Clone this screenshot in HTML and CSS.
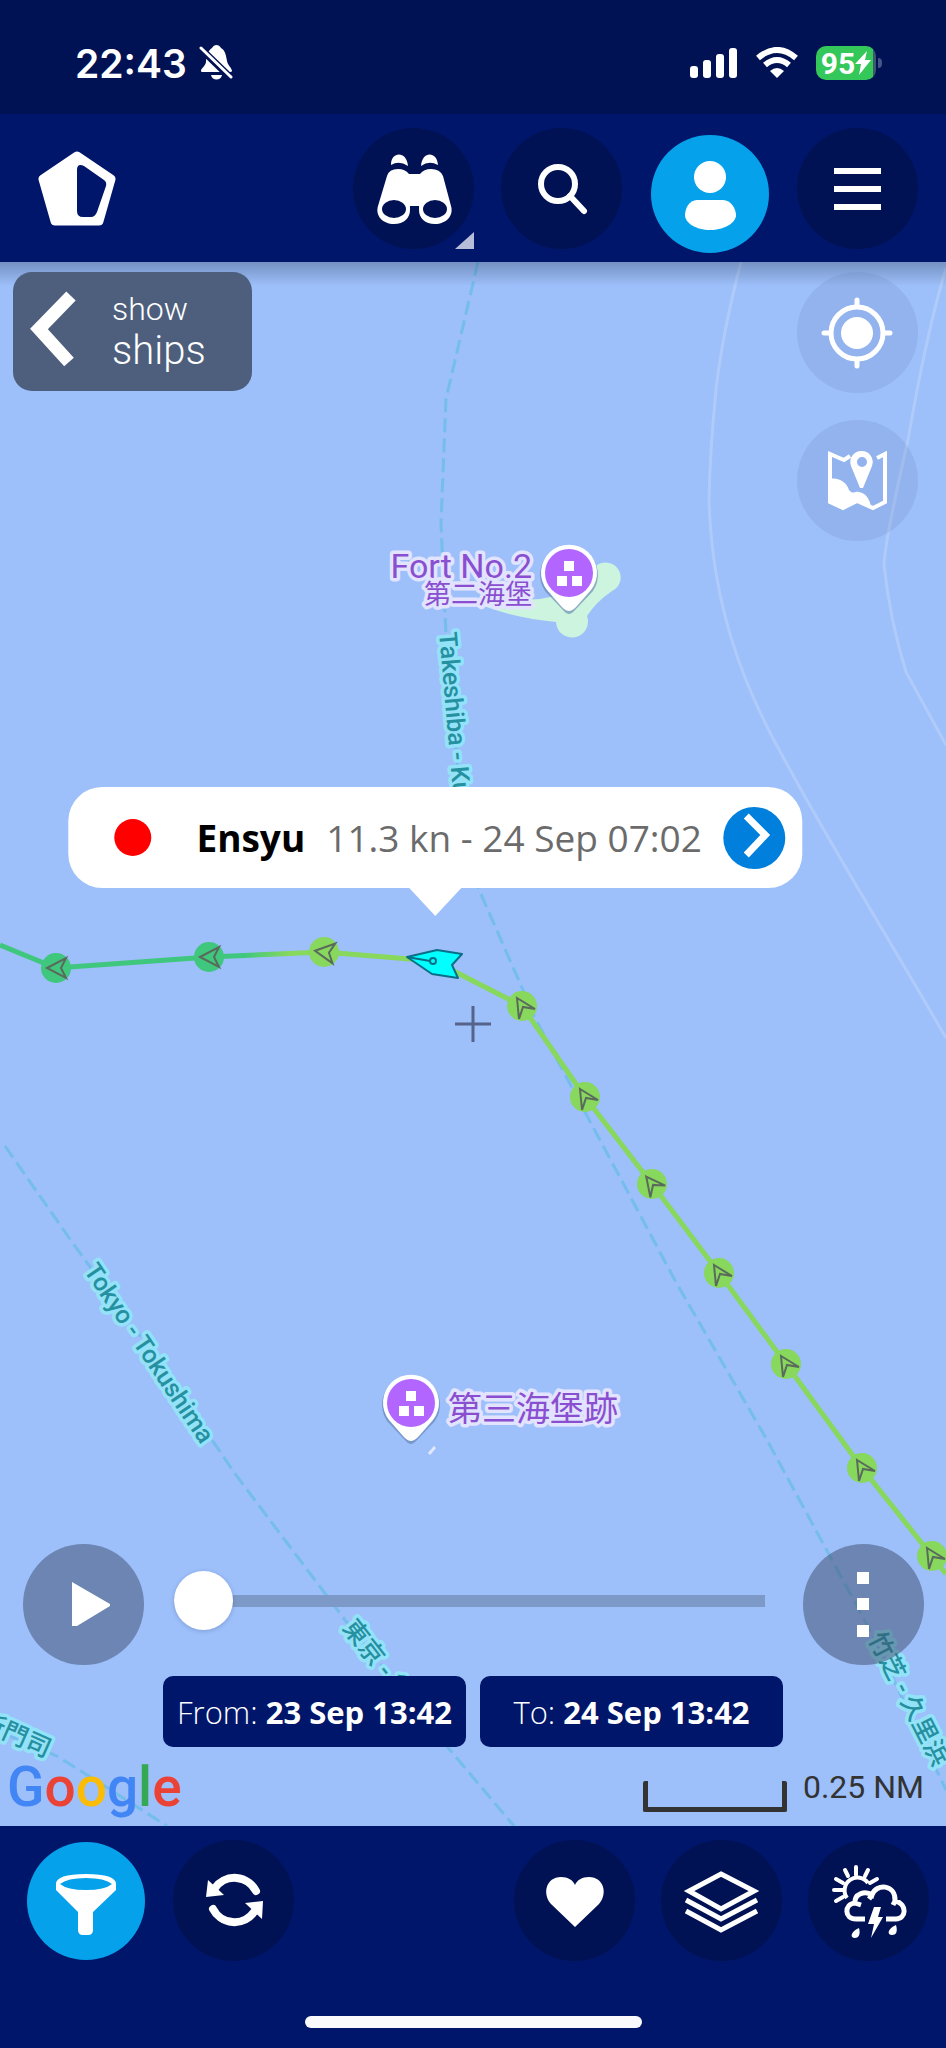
FILE: index.html
```html
<!DOCTYPE html>
<html lang="en">
<head>
    <meta charset="UTF-8">
    <meta name="viewport" content="width=device-width, initial-scale=1.0">
    <title>Ship Track Playback</title>
    <link rel="stylesheet" href="styles.css">
</head>
<body>
    <div class="status-bar">
        <span class="status-time">22:43</span>
        <svg class="icon-bell" width="34" height="36" viewBox="0 0 34 36">
            <path d="M2 26 C2 23 6 22 7 17 C7 9 10 5 13 3 C15 -1 20 -1 22 3 C26 5 27 10 28 16 C29 21 33 23 33 26 Q33 27 31 27 H3 Q2 27 2 26Z M12 30 H23 C22 36 13 36 12 30Z" fill="#fff"/>
            <path d="M1 3 L33 34" stroke="#011254" stroke-width="7"/>
            <path d="M2 3 L32 32" stroke="#fff" stroke-width="3" stroke-linecap="round"/>
        </svg>
        <div class="status-icons">
            <svg width="48" height="32" viewBox="0 0 48 32" fill="#fff">
                <rect x="0" y="19" width="8" height="12" rx="3"/>
                <rect x="13" y="13" width="8" height="18" rx="3"/>
                <rect x="26" y="7" width="8" height="24" rx="3"/>
                <rect x="39" y="1" width="8" height="30" rx="3"/>
            </svg>
            <svg width="42" height="32" viewBox="0 0 42 32" fill="none" stroke="#fff" stroke-width="6">
                <path d="M2 11 Q21 -5 40 11"/>
                <path d="M9 18 Q21 8 33 18"/>
                <path d="M21 31 L14 24 Q21 18 28 24Z" fill="#fff" stroke="none"/>
            </svg>
            <div class="battery">
                <span>95</span>
                <svg width="16" height="24" viewBox="0 0 14 24"><path d="M11 0 L-1 13 H5 L3 24 L15 9 H9Z" fill="#fff"/></svg>
            </div>
        </div>
    </div>

    <header class="top-bar">
        <a href="#" class="logo" aria-label="Home">
            <svg width="78" height="75" viewBox="0 0 78 75">
                <path d="M39 5 L73 28 L61 70 H17 L5 28Z" fill="#fff" stroke="#fff" stroke-width="9" stroke-linejoin="round"/>
                <path d="M39 19 Q39 12 46 15 L66 29 Q69 31 68 35 L59 61 Q57 66 53 66 H45 Q39 66 39 60Z" fill="#00166a"/>
            </svg>
        </a>
        <button class="round-btn" aria-label="Explore">
            <svg width="121" height="121" viewBox="0 0 121 121" fill="#fff">
                <path d="M38 37 C38 23 54 23 55 38 Q46 32 38 37Z M68 38 C69 23 84 23 85 37 Q76 32 68 38Z"/>
                <path fill-rule="evenodd" d="M34 48 Q36 41 45 41 Q52 41 56 46 H67 Q71 41 78 41 Q87 41 90 48 L98 78 C101 88 93 96 82 96 C72 96 66 90 66 82 V78 H57 V82 C57 90 51 96 41 96 C30 96 22 88 25 78Z M29 81 A12 9 0 0 0 53 81 A12 9 0 0 0 29 81Z M70 81 A12 9 0 0 0 94 81 A12 9 0 0 0 70 81Z"/>
                <path d="M121 104 V121 H102Z" fill="#b7bcd8"/>
            </svg>
        </button>
        <button class="round-btn" aria-label="Search">
            <svg width="121" height="121" viewBox="0 0 121 121" fill="none" stroke="#fff" stroke-width="6">
                <circle cx="57" cy="56" r="17"/>
                <path d="M69 68 L83 83" stroke-linecap="round"/>
            </svg>
        </button>
        <button class="round-btn active account" aria-label="Account">
            <svg width="118" height="118" viewBox="0 0 118 118" fill="#fff">
                <circle cx="59" cy="42" r="16"/>
                <path d="M46 65 H72 C80 65 85 74 85 80 C85 88 73 95 59 95 C45 95 34 88 34 80 C34 74 38 65 46 65Z"/>
            </svg>
        </button>
        <button class="round-btn" aria-label="Menu">
            <svg width="121" height="121" viewBox="0 0 121 121" stroke="#fff" stroke-width="6">
                <path d="M37 43 H84 M37 61 H84 M37 79 H84"/>
            </svg>
        </button>
    </header>

    <main class="map">
        <svg class="map-canvas" viewBox="0 262 946 1564" preserveAspectRatio="xMidYMid slice">
            <defs>
                <linearGradient id="speed" gradientUnits="userSpaceOnUse" x1="209" y1="0" x2="324" y2="0">
                    <stop offset="0.3" stop-color="#3fc77e"/>
                    <stop offset="0.7" stop-color="#87d85c"/>
                </linearGradient>
                <g id="pin">
                    <path d="M0 39 C-3 39 -6 35 -8 33 L-24 16 A29 29 0 1 1 24 16 L8 33 C6 35 3 39 0 39Z" fill="#5f7fae" opacity="0.6" transform="translate(0 2)"/>
                    <path d="M0 38 C-3 38 -6 35 -8 33 L-22 17 A28 28 0 1 1 22 17 L8 33 C6 35 3 38 0 38Z" fill="#fff"/>
                    <circle r="24" fill="#b366ff"/>
                    <path d="M-5 -12 h10 v10 h-10z M-12 3 h10 v10 h-10z M3 3 h10 v10 h-10z" fill="#fff"/>
                </g>
                <path id="west" d="M-9 0 L10 -10 L5 0 L10 10Z"/>
                <path id="northwest" d="M-5 -8 L13 3 L1 1 L-3 13Z"/>
            </defs>

            <!-- depth contours -->
            <g class="contour">
                <path d="M741 262 Q722 335 716 390 Q710 450 709 500 C712 600 740 680 782 755 C830 845 890 940 946 1038"/>
                <path d="M946 268 Q926 335 908 440 Q885 540 884 565 Q890 620 906 672 L946 745"/>
            </g>

            <!-- ferry routes -->
            <g class="ferry">
                <path d="M478 262 L446 399 L441 523 L446 635 L466 860 L523 990 L535 1018 L585 1112 L677 1284 L767 1440 L871 1632 L946 1790"/>
                <path d="M5 1146 L72 1242 L154 1355 L236 1475 L345 1620 L450 1750 L514 1826"/>
                <path d="M-10 1728 L57 1756 L95 1780 L167 1826"/>
            </g>

            <path d="M484 602 L540 599 L585 590 L594 568 A15 15 0 1 1 612 591 Q596 602 587 616 A16 16 0 1 1 556 622 Q515 618 484 606Z" fill="#ccf4de"/>
            <path d="M429 1454 L435 1447" stroke="#dfe9fb" stroke-width="3"/>

            <g class="route-label">
                <text transform="translate(447 632) rotate(85)" dy="8">Takeshiba - Ku</text>
                <text transform="translate(90 1266) rotate(56)" dy="8">Tokyo - Tokushima</text>
                <text transform="translate(348 1623) rotate(52)" dy="8">東京 - 徳島</text>
                <text transform="translate(-19 1720) rotate(24)" dy="8">新門司</text>
                <text transform="translate(875 1634) rotate(63)" dy="8">竹芝 - 久里浜</text>
            </g>

            <use href="#pin" x="569" y="573"/>
            <use href="#pin" x="411" y="1403"/>
            <g class="place-label">
                <text x="532" y="578" font-size="34" text-anchor="end">Fort No.2</text>
                <text x="532" y="604" font-size="27" text-anchor="end">第二海堡</text>
                <text x="448" y="1421" font-size="34">第三海堡跡</text>
            </g>

            <!-- ship track, coloured by speed -->
            <g class="track">
                <path d="M0 945 L56 968 L209 957" stroke="#3fc77e"/>
                <path d="M209 957 L324 952" stroke="url(#speed)"/>
                <path d="M324 952 L434 961 L522 1006 L585 1097 L652 1184 L719 1273 L786 1364 L862 1468 L932 1556 L946 1574" stroke="#87d85c"/>
            </g>
            <g fill="#3fc77e">
                <circle cx="56" cy="968" r="15"/>
                <circle cx="209" cy="957" r="15"/>
            </g>
            <g fill="#87d85c">
                <circle cx="324" cy="952" r="15"/>
                <circle cx="522" cy="1006" r="15"/>
                <circle cx="585" cy="1097" r="15"/>
                <circle cx="652" cy="1184" r="15"/>
                <circle cx="719" cy="1273" r="15"/>
                <circle cx="786" cy="1364" r="15"/>
                <circle cx="862" cy="1468" r="15"/>
                <circle cx="932" cy="1556" r="15"/>
            </g>
            <g class="heading">
                <use href="#west" x="56" y="968"/>
                <use href="#west" x="209" y="957"/>
                <use href="#west" transform="translate(324 952) rotate(8)"/>
                <use href="#northwest" x="522" y="1006"/>
                <use href="#northwest" x="585" y="1097"/>
                <use href="#northwest" transform="translate(652 1184) rotate(-6)"/>
                <use href="#northwest" x="719" y="1273"/>
                <use href="#northwest" x="786" y="1364"/>
                <use href="#northwest" x="862" y="1468"/>
                <use href="#northwest" x="932" y="1556"/>
            </g>

            <g stroke="#0a6f86" stroke-width="2" stroke-linejoin="round">
                <path d="M407 957 L437 950 L462 954 L452 965 L458 978 L432 974Z" fill="#0ff"/>
                <path d="M407 957 L430 961"/>
                <circle cx="433" cy="961" r="3" fill="#0ff"/>
            </g>
            <path d="M455 1024 H491 M473 1006 V1042" stroke="#56638a" stroke-width="3"/>
        </svg>

        <div class="popup">
            <span class="popup-dot"></span>
            <strong>Ensyu</strong>
            <span class="popup-info">11.3 kn - 24 Sep 07:02</span>
            <button class="popup-go" aria-label="Details">
                <svg width="62" height="62" viewBox="0 0 62 62" fill="none" stroke="#fff" stroke-width="7">
                    <path d="M23 9 L42 28 L23 48"/>
                </svg>
            </button>
        </div>

        <div class="map-top">
            <button class="show-ships">
                <svg width="46" height="78" viewBox="0 0 46 78" fill="none" stroke="#fff" stroke-width="13">
                    <path d="M41 5 L9 38 L39 71"/>
                </svg>
                <span class="show-ships-text">show<span>ships</span></span>
            </button>
            <div class="map-tools">
                <button class="round-btn faint" aria-label="My location">
                    <svg width="121" height="121" viewBox="0 0 121 121" fill="none" stroke="#fff" stroke-width="5">
                        <circle cx="60" cy="61" r="26"/>
                        <circle cx="60" cy="61" r="16" fill="#fff" stroke="none"/>
                        <path d="M60 28 V34 M60 88 V94 M27 61 H33 M87 61 H93" stroke-linecap="round"/>
                    </svg>
                </button>
                <button class="round-btn faint" aria-label="Map type">
                    <svg width="121" height="121" viewBox="0 0 121 121" fill="#fff">
                        <path d="M53 36 L47 40 L33 34 V82 L46 88 L60 81 L76 88 L88 82 V34 L80 38" fill="none" stroke="#fff" stroke-width="4"/>
                        <path d="M33 59 C42 57 50 63 52 70 C56 75 58 71 62 72 C69 73 73 80 74 87 L60 81 L46 89 L33 83Z"/>
                        <path fill-rule="evenodd" d="M65 31 A11 11 0 0 1 75 46 L66 68 H63 L54 46 A11 11 0 0 1 65 31Z M65 37 A5 5 0 0 0 65 47 A5 5 0 0 0 65 37Z"/>
                    </svg>
                </button>
            </div>
        </div>

        <div class="playback">
            <div class="player">
                <button class="round-btn dim" aria-label="Play">
                    <svg width="121" height="121" viewBox="0 0 121 121"><path d="M49 38 L87 60 V62 L54 82 H49Z" fill="#fff"/></svg>
                </button>
                <input class="timeline" type="range" min="0" max="100" value="0" aria-label="Track position">
                <button class="round-btn dim" aria-label="More options">
                    <svg width="121" height="121" viewBox="0 0 121 121" fill="#fff">
                        <path d="M54 28 h12 v12 h-12z M54 54 h12 v12 h-12z M54 81 h12 v12 h-12z"/>
                    </svg>
                </button>
            </div>
            <div class="dates">
                <button class="date-btn">From: <b>23 Sep 13:42</b></button>
                <button class="date-btn">To: <b>24 Sep 13:42</b></button>
            </div>
            <div class="map-footer">
                <div class="google"><span class="g-blue">G</span><span class="g-red">o</span><span class="g-yellow">o</span><span class="g-blue">g</span><span class="g-green">l</span><span class="g-red">e</span></div>
                <div class="scale"><span class="scale-bar"></span>0.25 NM</div>
            </div>
        </div>
    </main>

    <footer class="bottom-bar">
        <nav class="bottom-nav">
            <button class="round-btn active" aria-label="Filters">
                <svg width="118" height="118" viewBox="0 0 118 118" fill="#fff">
                    <path fill-rule="evenodd" d="M29 42 Q29 32 59 32 Q89 32 89 42 V48 L66 70 V88 Q66 93 61 93 H56 Q51 93 51 88 V70 L29 48Z M33 42 Q40 48 59 48 Q78 48 85 42 Q78 36 59 36 Q40 36 33 42Z"/>
                </svg>
            </button>
            <button class="round-btn" aria-label="Refresh">
                <svg width="121" height="121" viewBox="0 0 121 121" fill="#fff">
                    <path d="M83 51 A24 24 0 0 0 42 48 M40 69 A24 24 0 0 0 81 72" fill="none" stroke="#fff" stroke-width="8" stroke-linecap="round"/>
                    <path d="M35 40 L33 57 L51 55Z M72 63 L90 61 L89 79Z"/>
                </svg>
            </button>
            <button class="round-btn push" aria-label="Favourites">
                <svg width="121" height="121" viewBox="0 0 121 121" fill="#fff">
                    <path d="M61 87 L37 64 C28 54 32 37 47 37 C54 37 59 40 61 45 C63 40 68 37 75 37 C90 37 94 54 85 64Z"/>
                </svg>
            </button>
            <button class="round-btn" aria-label="Layers">
                <svg width="121" height="121" viewBox="0 0 121 121" fill="none" stroke="#fff" stroke-width="5">
                    <path d="M60 34 L93 51 L60 69 L28 51Z"/>
                    <path d="M25 60 L60 79 L96 60 M25 71 L60 90 L96 71"/>
                </svg>
            </button>
            <button class="round-btn" aria-label="Weather">
                <svg width="121" height="121" viewBox="0 0 121 121" fill="none" stroke="#fff" stroke-width="4">
                    <path d="M39 58 A12 12 0 1 1 60 43"/>
                    <path d="M48 27 V35 M37 30 L40 36 M60 30 L57 36 M28 39 L35 43 M69 39 L62 43 M26 50 H35 M28 61 L35 57" stroke-linecap="round"/>
                    <path d="M57 79 H48 C36 79 36 64 47 63 C46 54 57 50 64 55 C68 43 88 44 87 61 C100 64 98 79 88 79 H78 M47 63 L53 65 M64 55 L61 59 M87 61 L85 65" stroke-width="5"/>
                    <path d="M66 67 H73 L70 77 H75 L63 98 L66 84 H60Z M51 88 C53 95 50 98 47 98 C42 98 42 92 51 88Z M88 85 C90 92 88 95 84 95 C79 95 79 89 88 85Z" fill="#fff" stroke="none"/>
                </svg>
            </button>
        </nav>
        <div class="home-indicator"></div>
    </footer>
</body>
</html>
```
FILE: styles.css
```css
* {
    box-sizing: border-box;
}

body {
    margin: 0;
    min-height: 100vh;
    display: flex;
    flex-direction: column;
    background: #00166a;
    font-family: "Open Sans", "Noto Sans", sans-serif;
}

button {
    padding: 0;
    border: none;
    font: inherit;
    color: #fff;
    cursor: pointer;
}

svg {
    display: block;
}

/* status bar */
.status-bar {
    height: 114px;
    padding: 12px 64px 0 75px;
    display: flex;
    align-items: center;
    gap: 12px;
    background: #011254;
    color: #fff;
}

.status-time {
    font: 600 39px "Inter", sans-serif;
}

.status-icons {
    margin-left: auto;
    display: flex;
    align-items: center;
    gap: 18px;
}

.battery {
    position: relative;
    width: 60px;
    height: 34px;
    margin-right: 6px;
    display: flex;
    align-items: center;
    justify-content: center;
    border-radius: 10px;
    background: linear-gradient(90deg, #34c759 95%, #3c5a6b 95%);
    font: 700 30px "Roboto", sans-serif;
}

.battery::after {
    content: "";
    position: absolute;
    right: -6px;
    top: 12px;
    width: 4px;
    height: 10px;
    border-radius: 0 4px 4px 0;
    background: #46548a;
}

/* header */
.top-bar {
    height: 148px;
    padding: 0 28px 0 38px;
    display: flex;
    align-items: center;
    gap: 27px;
    background: #00166a;
}

.logo {
    margin-right: auto;
}

.round-btn {
    flex: none;
    width: 121px;
    height: 121px;
    display: flex;
    align-items: center;
    justify-content: center;
    border-radius: 50%;
    background: #011254;
}

.round-btn.active {
    width: 118px;
    height: 118px;
    margin: 0 2px;
    background: #05a2eb;
}

.round-btn.account {
    margin: 12px 1px 0 2px;
}

.round-btn.faint {
    background: rgba(100, 125, 175, 0.18);
}

.round-btn.dim {
    background: rgba(60, 75, 105, 0.5);
}

/* map */
.map {
    position: relative;
    flex: 1;
    display: flex;
    flex-direction: column;
    justify-content: space-between;
    overflow: hidden;
    background: #9dbffa;
}

.map::before {
    content: "";
    position: absolute;
    z-index: 1;
    top: 0;
    left: 0;
    right: 0;
    height: 24px;
    background: linear-gradient(rgba(40, 60, 90, 0.35), rgba(40, 60, 90, 0));
}

.map-canvas {
    position: absolute;
    top: 0;
    left: 0;
    width: 100%;
    height: 100%;
}

.contour {
    fill: none;
    stroke: #b0cbfa;
    stroke-width: 3;
}

.ferry {
    fill: none;
    stroke: #74bdec;
    stroke-width: 3;
    stroke-dasharray: 14 6;
}

.route-label {
    font: 500 25px "Roboto", "Noto Sans CJK JP", sans-serif;
    fill: #25909f;
    stroke: #93e2f8;
    stroke-width: 7;
    stroke-linejoin: round;
    paint-order: stroke;
}

.place-label {
    font-family: "Roboto", "Noto Sans CJK JP", sans-serif;
    fill: #8a4fd0;
    stroke: #e2e4ff;
    stroke-width: 7;
    stroke-linejoin: round;
    paint-order: stroke;
}

.track {
    fill: none;
    stroke-width: 5;
}

.heading {
    fill: none;
    stroke: #5a6a5c;
    stroke-width: 2;
}

.popup {
    position: absolute;
    left: 46%;
    top: 525px;
    transform: translateX(-50%);
    height: 101px;
    padding: 0 17px 0 46px;
    display: flex;
    align-items: center;
    gap: 21px;
    border-radius: 34px;
    background: #fff;
    font-size: 37px;
    white-space: nowrap;
}

.popup::after {
    content: "";
    position: absolute;
    left: 50%;
    top: 100%;
    margin-left: -26px;
    border: 26px solid transparent;
    border-top: 28px solid #fff;
    border-bottom: 0;
}

.popup-dot {
    width: 37px;
    height: 37px;
    margin-right: 24px;
    border-radius: 50%;
    background: #f00;
}

.popup-info {
    color: #6b6b6b;
}

.popup-go {
    border-radius: 50%;
    background: #007fdc;
}

.map-top {
    position: relative;
    z-index: 2;
    padding: 10px 28px 0 13px;
    display: flex;
    align-items: flex-start;
    justify-content: space-between;
}

.show-ships {
    width: 239px;
    height: 119px;
    padding: 0 17px 4px;
    display: flex;
    align-items: center;
    gap: 36px;
    border-radius: 19px;
    background: #4e5f7d;
    text-align: left;
}

.show-ships-text {
    font: 300 32px/42px "Roboto", sans-serif;
}

.show-ships-text span {
    display: block;
    font-size: 40px;
}

.map-tools {
    display: flex;
    flex-direction: column;
    gap: 27px;
}

.playback {
    position: relative;
}

.player {
    padding: 0 22px 0 23px;
    display: flex;
    align-items: center;
    gap: 30px;
}

.timeline {
    flex: 1;
    height: 60px;
    margin: 0 8px 8px 0;
    appearance: none;
    background: transparent;
}

.timeline::-webkit-slider-runnable-track {
    height: 12px;
    background: #7d99c8;
}

.timeline::-webkit-slider-thumb {
    appearance: none;
    width: 59px;
    height: 59px;
    margin-top: -24px;
    border-radius: 50%;
    background: #fff;
    box-shadow: 0 1px 4px rgba(60, 80, 130, 0.3);
}

.dates {
    margin-top: 11px;
    display: flex;
    justify-content: center;
    gap: 14px;
}

.date-btn {
    width: 303px;
    height: 71px;
    border-radius: 10px;
    background: #00166a;
    font-size: 31px;
    font-weight: 300;
}

.date-btn b {
    font-weight: 700;
}

.map-footer {
    height: 79px;
    padding: 0 22px 0 7px;
    display: flex;
    align-items: center;
    justify-content: space-between;
}

.google {
    font: 500 55px/60px "Roboto", sans-serif;
}

.g-blue { color: #4285f4; }
.g-red { color: #ea4335; }
.g-yellow { color: #fbbc05; }
.g-green { color: #34a853; }

.scale {
    display: flex;
    align-items: center;
    gap: 16px;
    font: 32px "Roboto", sans-serif;
    color: #333;
}

.scale-bar {
    width: 144px;
    height: 31px;
    margin-top: 20px;
    border: 5px solid #333;
    border-top: none;
    border-radius: 2px;
}

/* bottom bar */
.bottom-bar {
    padding: 14px 0 20px;
    background: #00166a;
}

.bottom-nav {
    padding: 0 17px 0 25px;
    display: flex;
    align-items: center;
    gap: 26px;
}

.push {
    margin-left: auto;
}

.home-indicator {
    width: 337px;
    height: 12px;
    margin: 55px auto 0;
    border-radius: 6px;
    background: #fafafc;
}
```
